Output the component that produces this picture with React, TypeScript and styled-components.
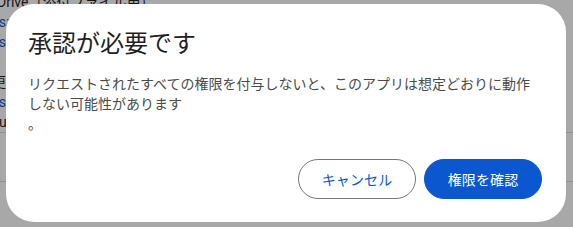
import React from "react";
import styled, { createGlobalStyle } from "styled-components";

const Global = createGlobalStyle`
  html, body { margin: 0; padding: 0; background: #ffffff; }
  body { font-family: Roboto, "Noto Sans CJK JP", "Noto Sans", sans-serif; overflow: hidden; }
  * { box-sizing: border-box; }
`;

const Page = styled.div`
  width: 573px;
  height: 227px;
  overflow: hidden;
`;

const Section = styled.div`
  margin-top: -8px;
  border-bottom: 1px solid #dadce0;
`;

const Section2 = styled.div`
  height: 49px;
  border-bottom: 1px solid #dadce0;
`;

const Line = styled.div<{ $link?: boolean; $indent?: number }>`
  height: 20px;
  line-height: 20px;
  font-size: 14px;
  white-space: nowrap;
  color: ${(p) => (p.$link ? "#0b57d0" : "#1f1f1f")};
  margin-left: ${(p) => p.$indent ?? 0}px;
`;

const Scrim = styled.div`
  position: fixed;
  inset: 0;
  background: rgba(0, 0, 0, 0.34);
  display: flex;
  padding: 4px 7px 5px 6px;
`;

const Dialog = styled.div`
  flex: 1;
  background: #ffffff;
  border-radius: 28px;
  padding: 24px 24px 23px 22px;
  display: flex;
  flex-direction: column;
`;

const Title = styled.h1`
  margin: 0;
  font-size: 24px;
  line-height: 32px;
  font-weight: 400;
  color: #1f1f1f;
`;

const Body = styled.div`
  margin-top: 14px;
  font-size: 14px;
  line-height: 20px;
  color: #4a4c4a;
`;

const Actions = styled.div`
  margin-top: auto;
  display: flex;
  justify-content: flex-end;
  gap: 8px;
`;

const Button = styled.button<{ $filled?: boolean }>`
  height: 40px;
  min-width: 118px;
  padding: 0 16px;
  border-radius: 20px;
  font-family: Roboto, "Noto Sans CJK JP", sans-serif;
  font-size: 14px;
  font-weight: 400;
  letter-spacing: 0.1px;
  cursor: pointer;
  border: ${(p) => (p.$filled ? "1px solid #0b57d0" : "1px solid #747775")};
  background: ${(p) => (p.$filled ? "#0b57d0" : "#ffffff")};
  color: ${(p) => (p.$filled ? "#ffffff" : "#0b57d0")};
`;

export default function App() {
  return (
    <>
      <Global />
      <Page>
        <Section>
          <Line $indent={-3}>Drive（添付ファイル用）</Line>
          <Line $link $indent={-26}>https://www.googleapis.com/auth/drive.file</Line>
          <Line $link $indent={-26}>https://www.googleapis.com/auth/drive</Line>
          <Line />
          <Line $indent={-8}>更新</Line>
          <Line $link $indent={-26}>https://www.googleapis.com/auth/userinfo</Line>
          <Line $indent={-1}>userinfo</Line>
        </Section>
        <Section2 />
      </Page>
      <Scrim>
        <Dialog role="dialog">
          <Title>承認が必要です</Title>
          <Body>
            リクエストされたすべての権限を付与しないと、このアプリは想定どおりに動作しない可能性があります
            <br />。
          </Body>
          <Actions>
            <Button>キャンセル</Button>
            <Button $filled>権限を確認</Button>
          </Actions>
        </Dialog>
      </Scrim>
    </>
  );
}
